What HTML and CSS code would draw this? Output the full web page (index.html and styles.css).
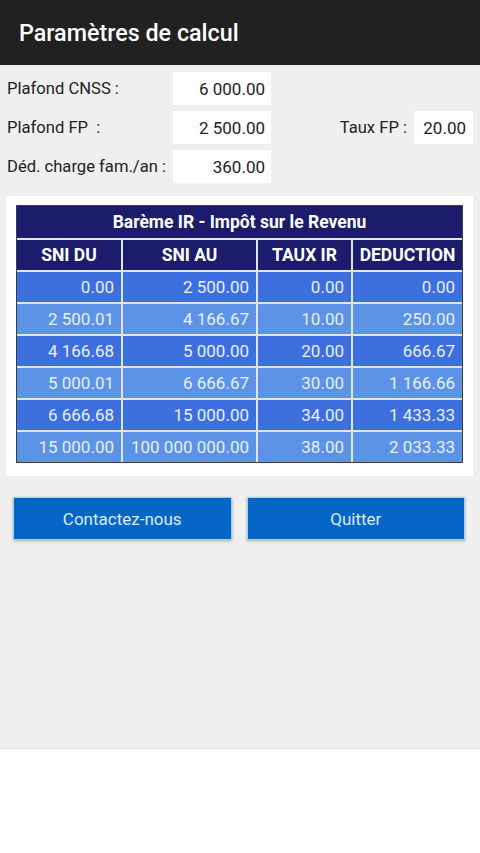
FILE: index.html
```html
<!DOCTYPE html>
<html>
<head>
	<meta charset="utf-8">
	<meta name="viewport" content="width=device-width, initial-scale=1">
	<title>Paramètres de calcul</title>
	<link rel="stylesheet" href="styles.css">
</head>
<body>
	<div class="page">
		<div class="topbar">
			<h1>Paramètres de calcul</h1>
		</div>

		<div class="params">
			<div class="param-row">
				<label>Plafond CNSS :</label>
				<input type="text" class="field" value="6 000.00">
			</div>
			<div class="param-row">
				<label>Plafond FP&nbsp; :</label>
				<input type="text" class="field" value="2 500.00">
				<label class="label-fp">Taux FP :</label>
				<input type="text" class="field field-small" value="20.00">
			</div>
			<div class="param-row">
				<label>Déd. charge fam./an :</label>
				<input type="text" class="field" value="360.00">
			</div>
		</div>

		<div class="bareme">
			<div class="grid">
				<div class="cell title">Barème IR - Impôt sur le Revenu</div>
				<div class="cell head">SNI DU</div>
				<div class="cell head">SNI AU</div>
				<div class="cell head">TAUX IR</div>
				<div class="cell head">DEDUCTION</div>

				<div class="cell dark">0.00</div>
				<div class="cell dark">2 500.00</div>
				<div class="cell dark">0.00</div>
				<div class="cell dark">0.00</div>

				<div class="cell light">2 500.01</div>
				<div class="cell light">4 166.67</div>
				<div class="cell light">10.00</div>
				<div class="cell light">250.00</div>

				<div class="cell dark">4 166.68</div>
				<div class="cell dark">5 000.00</div>
				<div class="cell dark">20.00</div>
				<div class="cell dark">666.67</div>

				<div class="cell light">5 000.01</div>
				<div class="cell light">6 666.67</div>
				<div class="cell light">30.00</div>
				<div class="cell light">1 166.66</div>

				<div class="cell dark">6 666.68</div>
				<div class="cell dark">15 000.00</div>
				<div class="cell dark">34.00</div>
				<div class="cell dark">1 433.33</div>

				<div class="cell light">15 000.00</div>
				<div class="cell light">100 000 000.00</div>
				<div class="cell light">38.00</div>
				<div class="cell light">2 033.33</div>
			</div>
		</div>

		<div class="actions">
			<button class="btn">Contactez-nous</button>
			<button class="btn">Quitter</button>
		</div>

		<div class="ad-zone"></div>
	</div>
</body>
</html>
```

FILE: styles.css
```css
html, body {
	margin: 0;
	padding: 0;
}
body {
	font-family: Roboto, "Liberation Sans", Arial, sans-serif;
	background-color: #efefef;
	color: #222;
}
.page {
	display: flex;
	flex-direction: column;
	height: 853px;
}
.topbar {
	background: #212121;
	height: 65px;
	display: flex;
	align-items: center;
	padding-left: 19px;
}
.topbar h1 {
	margin: 0;
	color: #fff;
	font-size: 23.3px;
	font-weight: 500;
}
.params {
	padding: 7px 7px 0 7px;
	display: flex;
	flex-direction: column;
	gap: 6px;
}
.param-row {
	display: flex;
	align-items: center;
	height: 33px;
}
.param-row label {
	width: 166px;
	font-size: 16.6px;
	color: #222;
}
.param-row .label-fp {
	width: auto;
	margin-left: auto;
	margin-right: 7px;
}
.field {
	box-sizing: border-box;
	width: 98px;
	height: 33px;
	border: none;
	background: #fff;
	font-family: inherit;
	font-size: 17px;
	color: #222;
	text-align: right;
	padding: 0 6px 0 0;
	margin: 0;
	outline: none;
}
.field-small {
	width: 59px;
	padding-right: 7px;
}
.bareme {
	background: #fff;
	margin: 13px 7px 0 6px;
	padding: 9px 9px 13px 10px;
}
.grid {
	display: grid;
	grid-template-columns: 104px 133px 93px 109px;
	grid-template-rows: 32px 30px repeat(6, 30px);
	gap: 2px;
	background: #dfe5ee;
	border: 1px solid #3c3c4a;
	width: max-content;
}
.cell {
	display: flex;
	align-items: center;
	font-size: 17px;
}
.title {
	grid-column: 1 / 5;
	justify-content: center;
	background: #1b1c6c;
	color: #fff;
	font-weight: bold;
	font-size: 17.5px;
}
.head {
	justify-content: center;
	background: #1b1c6c;
	color: #fff;
	font-weight: bold;
	font-size: 17.5px;
}
.dark, .light {
	justify-content: flex-end;
	padding-right: 7px;
	color: #e8efff;
}
.dark {
	background: #3e6fdf;
}
.light {
	background: #5c93e6;
}
.actions {
	display: flex;
	gap: 15px;
	padding: 21px 15px 0 13px;
}
.btn {
	flex: 1;
	height: 43px;
	background: #0566c8;
	color: #dcecff;
	border: 1px solid #9bd3f0;
	border-radius: 1px;
	box-shadow: 0 1px 3px rgba(0, 0, 0, 0.3);
	font-family: inherit;
	font-size: 17px;
	cursor: pointer;
}
.ad-zone {
	margin-top: auto;
	height: 104px;
	background: #fff;
	border-top: 1px solid #e4e4e4;
}
```
